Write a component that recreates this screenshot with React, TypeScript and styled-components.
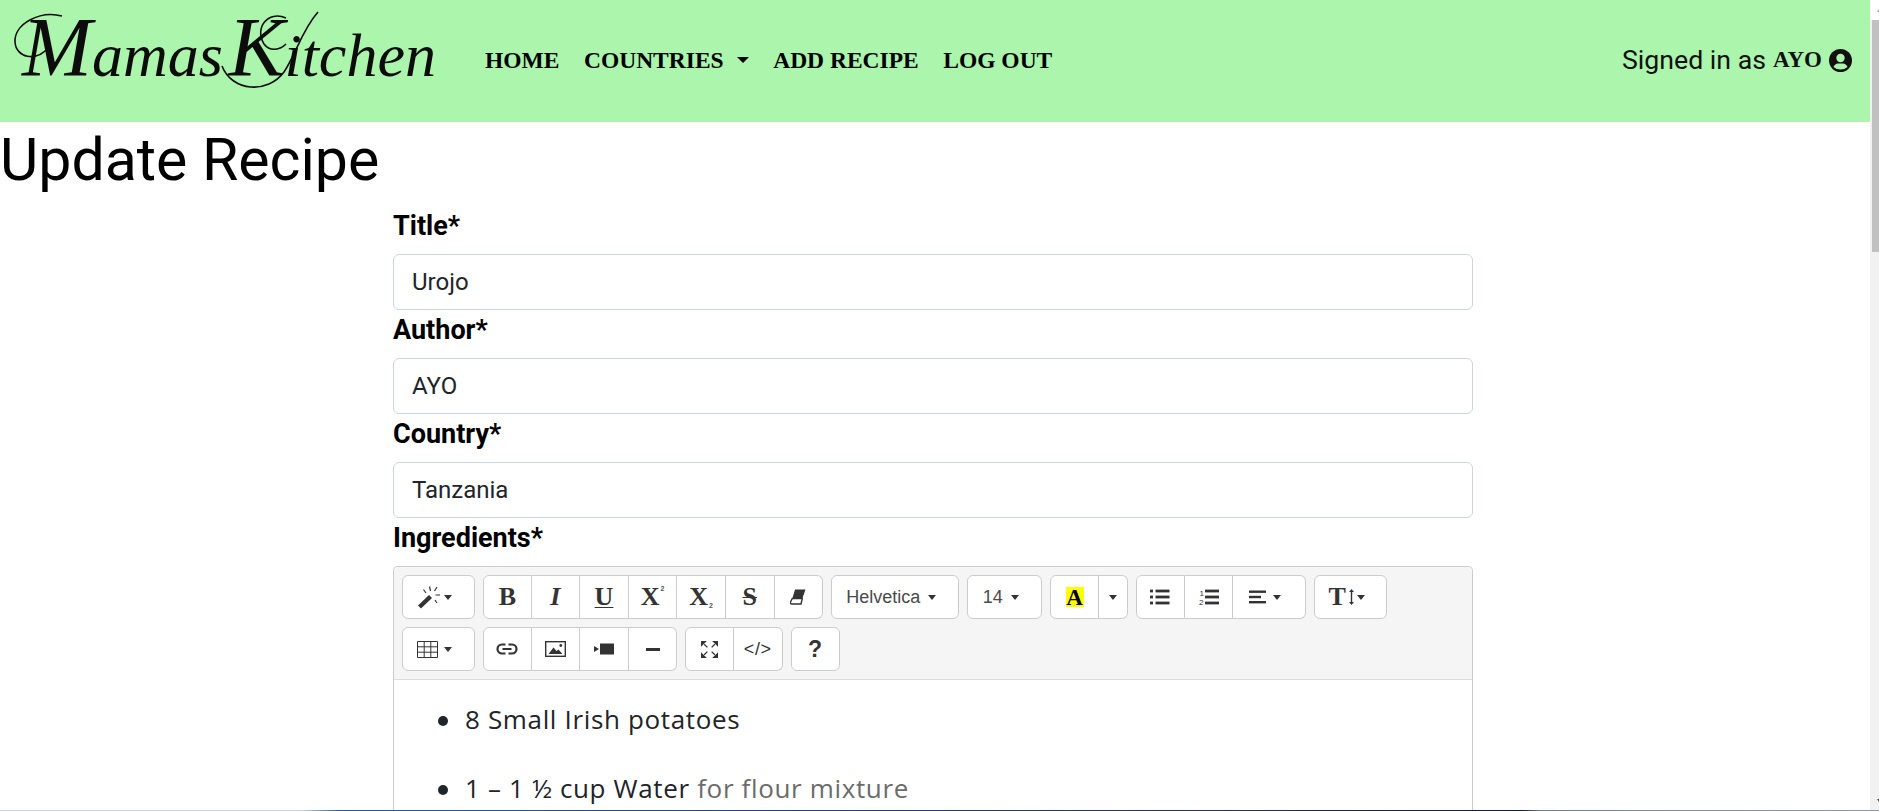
import styled, { createGlobalStyle } from 'styled-components';

const GlobalStyle = createGlobalStyle`
  html, body {
    margin: 0;
    padding: 0;
    background: #fff;
    overflow: hidden;
  }
  * { box-sizing: border-box; }
`;

const Page = styled.div`
  display: flex;
  flex-direction: column;
  height: 811px;
  overflow: hidden;
  font-family: Roboto, 'Liberation Sans', sans-serif;
  color: #000;
`;

const Window = styled.div`
  display: flex;
  flex: 1;
  min-height: 0;
`;

const Main = styled.div`
  flex: 1;
  min-width: 0;
  overflow: hidden;
`;

const Rail = styled.div`
  width: 9px;
  display: flex;
  flex-direction: column;
  align-items: flex-start;
  background: #f1f1f1;
`;

const RailCap = styled.div<{ $down?: boolean }>`
  height: 20px;
  width: 9px;
  display: flex;
  align-items: center;
  justify-content: flex-end;
  background: ${({ $down }) => ($down ? '#f1f1f1' : '#fff')};

  &::after {
    content: '';
    display: block;
    border-left: 2px solid transparent;
    border-right: 0;
    ${({ $down }) =>
      $down ? 'border-top: 3px solid #505050;' : 'border-bottom: 3px solid #a0a0a0;'}
  }
`;

const RailThumb = styled.div`
  width: 7px;
  height: 232px;
  margin-left: 2px;
  background: #c1c1c1;
`;

const RailSpace = styled.div`
  flex: 1;
`;

const Taskbar = styled.div`
  height: 1px;
  background: linear-gradient(
    90deg,
    #c9d6e0 0,
    #c9d6e0 16%,
    #2d5f8a 18%,
    #23466e 45%,
    #2a2f4f 65%,
    #0f1c3a 81%,
    #6f8490 82%,
    #8c9aa3 100%
  );
`;

/* navbar */
const Navbar = styled.nav`
  height: 122px;
  display: flex;
  align-items: flex-start;
  background: #abf5ac;
`;

const Logo = styled.a`
  position: relative;
  display: block;
  width: 482px;
  height: 110px;
  padding-left: 22px;
  font-family: 'Liberation Serif', serif;
  font-style: italic;
  font-size: 62px;
  line-height: 110px;
  white-space: nowrap;
  color: #0c0c0c;
  word-spacing: -10px;
`;

const LogoCap = styled.span`
  font-size: 84px;
  line-height: 80px;
`;

const LogoSwash = styled.svg`
  position: absolute;
  left: 0;
  top: 0;
  fill: none;
  stroke: #0c0c0c;
`;

const NavLinks = styled.div`
  display: flex;
  align-items: center;
  height: 122px;
  padding-left: 3px;
  gap: 24.5px;
  padding-bottom: 2px;
`;

const NavLink = styled.a`
  display: flex;
  align-items: center;
  gap: 13px;
  font-family: 'Liberation Serif', serif;
  font-weight: 700;
  font-size: 23.5px;
  color: #000;
  white-space: nowrap;
`;

const NavCaret = styled.span`
  display: block;
  border-left: 6.5px solid transparent;
  border-right: 6.5px solid transparent;
  border-top: 6.5px solid #000;
`;

const SignedIn = styled.div`
  margin-left: auto;
  height: 122px;
  display: flex;
  align-items: center;
  gap: 7px;
  padding: 0 18px 2px 0;
  font-size: 26.7px;
  color: #111;
  white-space: nowrap;
`;

const UserName = styled.span`
  font-family: 'Liberation Serif', serif;
  font-weight: 700;
  font-size: 23px;
`;

/* form */
const Heading = styled.h1`
  margin: 0 0 8px;
  font-weight: 400;
  font-size: 59px;
  line-height: 76px;
  color: #000;
`;

const Form = styled.form`
  width: 1080px;
  margin-left: 393px;
`;

const Label = styled.label`
  display: block;
  height: 36px;
  margin-bottom: 12px;
  font-weight: 700;
  font-size: 27px;
  line-height: 40px;
`;

const Input = styled.input`
  display: block;
  width: 100%;
  height: 56px;
  padding: 0 18px;
  border: 1px solid #ced4da;
  border-radius: 6px;
  background: #fff;
  color: #212529;
  font-family: Roboto, sans-serif;
  font-size: 24px;
`;

/* summernote style editor */
const Editor = styled.div`
  border: 1px solid #ccc;
  border-bottom: 0;
  border-radius: 5px 5px 0 0;
`;

const Toolbar = styled.div`
  display: flex;
  flex-direction: column;
  gap: 8px;
  height: 113px;
  padding: 8px 8px 0;
  background: #f5f5f5;
  border-bottom: 1px solid #ddd;
  border-radius: 5px 5px 0 0;
`;

const ToolRow = styled.div`
  display: flex;
  gap: 8px;
`;

const ToolGroup = styled.div`
  display: flex;
`;

const ToolButton = styled.button<{ $w?: number; $drop?: boolean; $gap?: number }>`
  display: flex;
  align-items: center;
  justify-content: center;
  gap: ${({ $gap }) => $gap ?? 0}px;
  width: ${({ $w }) => $w ?? 48.6}px;
  height: 44px;
  padding: 0 ${({ $drop }) => ($drop ? 8 : 0)}px 0 0;
  border: 1px solid #ccc;
  background: #fff;
  color: #333;

  & + & {
    border-left: 0;
  }
  &:first-child {
    border-radius: 6px 0 0 6px;
  }
  &:last-child {
    border-radius: 0 6px 6px 0;
  }
  &:only-child {
    border-radius: 6px;
  }
`;

const ToolLabel = styled.span`
  font-family: 'Liberation Sans', sans-serif;
  font-size: 18px;
  line-height: 24px;
  color: #4a4a4a;
`;

const Caret = styled.span`
  display: block;
  border-left: 4px solid transparent;
  border-right: 4px solid transparent;
  border-top: 5px solid #333;
`;

const Glyph = styled.span<{ $italic?: boolean; $under?: boolean; $strike?: boolean }>`
  padding: 0 ${({ $strike }) => ($strike ? 2 : 0)}px;
  font-family: 'Liberation Serif', serif;
  font-weight: 700;
  font-size: 26px;
  line-height: 30px;
  color: #333;
  font-style: ${({ $italic }) => ($italic ? 'italic' : 'normal')};
  text-decoration: ${({ $under, $strike }) =>
    $under ? 'underline' : $strike ? 'line-through' : 'none'};
  text-decoration-thickness: 1px;
  text-underline-offset: 2px;
`;

const Small = styled.span<{ $sub?: boolean }>`
  font-family: 'Liberation Sans', sans-serif;
  font-size: 7px;
  line-height: 8px;
  font-weight: 700;
  color: #555;
  align-self: ${({ $sub }) => ($sub ? 'flex-end' : 'flex-start')};
  margin: ${({ $sub }) => ($sub ? '0 0 8px 1px' : '9px 0 0 1px')};
`;

const Highlight = styled.span`
  display: block;
  width: 18px;
  height: 20px;
  background: #ff0;
  color: #000;
  font-family: 'Liberation Serif', serif;
  font-weight: 700;
  font-size: 23px;
  line-height: 21px;
  text-align: center;
`;

const CodeText = styled.span`
  font-family: 'Liberation Sans', sans-serif;
  font-size: 18px;
  letter-spacing: 0.6px;
  color: #333;
`;

const HelpText = styled.span`
  font-family: 'Liberation Sans', sans-serif;
  font-weight: 700;
  font-size: 23px;
  color: #333;
`;

const EditorBody = styled.div`
  height: 300px;
  background: #fff;
  padding-top: 22px;
`;

const List = styled.ul`
  margin: 0;
  padding: 0 0 0 44px;
  list-style: none;
  font-family: 'Open Sans', sans-serif;
  font-size: 26px;
  line-height: 34px;
  letter-spacing: 0.65px;
  color: #212529;
`;

const Item = styled.li`
  display: flex;
  align-items: center;
  gap: 17px;
  margin-bottom: 35px;

  &::before {
    content: '';
    flex: none;
    width: 10px;
    height: 10px;
    margin-top: 3px;
    border-radius: 50%;
    background: #212529;
  }
`;

const Muted = styled.span`
  color: #6b6b6b;
`;

const IconSvg = styled.svg`
  display: block;
  fill: #333;
`;

function WandIcon() {
  return (
    <IconSvg width="24" height="24" viewBox="0 0 24 24">
      <path d="M1 20.5 L12 10 L15 13 L4 23.5 Z" />
      <path d="M12.5 1.5 L13.5 6 M20 2 L17.5 6 M23 10 L18.5 10 M18 15 L20 18 M6.5 4.5 L9 8" stroke="#333" strokeWidth="1.2" fill="none" />
    </IconSvg>
  );
}

function EraserIcon() {
  return (
    <IconSvg width="16" height="16" viewBox="0 0 16 16">
      <path d="M5 0.5 H15.5 L12.5 9 H2.5 Z" />
      <path d="M2.3 9.5 H12.3 L11 15 H1.8 Q0 15 0.5 13 Z" fill="#fff" stroke="#333" strokeWidth="1.4" />
    </IconSvg>
  );
}

function UnorderedIcon() {
  return (
    <IconSvg width="20" height="16" viewBox="0 0 20 16">
      <rect x="0" y="0.6" width="3" height="2.8" />
      <rect x="0" y="6.6" width="3" height="2.8" />
      <rect x="0" y="12.6" width="3" height="2.8" />
      <rect x="5.5" y="0.6" width="14" height="2.8" />
      <rect x="5.5" y="6.6" width="14" height="2.8" />
      <rect x="5.5" y="12.6" width="14" height="2.8" />
    </IconSvg>
  );
}

function OrderedIcon() {
  return (
    <IconSvg width="20" height="16" viewBox="0 0 20 16">
      <rect x="6" y="0.6" width="14" height="2.8" />
      <rect x="6" y="6.6" width="14" height="2.8" />
      <rect x="6" y="12.6" width="14" height="2.8" />
      <text x="0.5" y="7" fontSize="8" fontFamily="Liberation Sans">1</text>
      <text x="0" y="16" fontSize="8" fontFamily="Liberation Sans">2</text>
    </IconSvg>
  );
}

function AlignIcon() {
  return (
    <IconSvg width="18" height="14" viewBox="0 0 18 14">
      <rect x="0" y="0.5" width="17" height="2.4" />
      <rect x="0" y="5.8" width="12" height="2.4" />
      <rect x="0" y="11" width="17" height="2.4" />
    </IconSvg>
  );
}

function LineHeightIcon() {
  return (
    <IconSvg width="5" height="16" viewBox="0 0 5 16">
      <path d="M2.5 0 L5 3 H3.2 V13 H5 L2.5 16 L0 13 H1.8 V3 H0 Z" />
    </IconSvg>
  );
}

function TableIcon() {
  return (
    <IconSvg width="21" height="17" viewBox="0 0 21 17">
      <path
        d="M0.5 0.5 H20.5 V16.5 H0.5 Z M0.5 5.8 H20.5 M0.5 11.2 H20.5 M7.2 0.5 V16.5 M13.8 0.5 V16.5"
        fill="none"
        stroke="#333"
        strokeWidth="1"
      />
    </IconSvg>
  );
}

function LinkIcon() {
  return (
    <IconSvg width="22" height="12" viewBox="0 0 22 12">
      <path
        d="M9.5 1.5 H6 A4.5 4.5 0 0 0 6 10.5 H9.5 M12.5 1.5 H16 A4.5 4.5 0 0 1 16 10.5 H12.5 M6.5 6 H15.5"
        fill="none"
        stroke="#333"
        strokeWidth="2.2"
      />
    </IconSvg>
  );
}

function PictureIcon() {
  return (
    <IconSvg width="21" height="16" viewBox="0 0 21 16">
      <rect x="0.7" y="0.7" width="19.6" height="14.6" fill="none" stroke="#333" strokeWidth="1.4" />
      <path d="M3.5 13 L8.5 6.5 L11.5 10 L13.5 8.5 L17.5 13 Z" />
      <circle cx="15.8" cy="4.5" r="1.4" />
    </IconSvg>
  );
}

function VideoIcon() {
  return (
    <IconSvg width="20" height="12" viewBox="0 0 20 12">
      <rect x="6" y="0.5" width="14" height="11" />
      <path d="M0 3 L5 6 L0 9 Z" />
    </IconSvg>
  );
}

function RuleIcon() {
  return (
    <IconSvg width="14" height="3" viewBox="0 0 14 3">
      <rect width="14" height="3" />
    </IconSvg>
  );
}

function ExpandIcon() {
  return (
    <IconSvg width="17" height="17" viewBox="0 0 16 16">
      <path d="M0 0 H5.5 L0 5.5 Z M16 0 V5.5 L10.5 0 Z M0 16 V10.5 L5.5 16 Z M16 16 H10.5 L16 10.5 Z" />
      <path d="M3 3 L6 6 M13 3 L10 6 M3 13 L6 10 M13 13 L10 10" stroke="#333" strokeWidth="1.2" fill="none" />
    </IconSvg>
  );
}

function UserIcon() {
  return (
    <svg width="23" height="23" viewBox="0 0 23 23" style={{ display: 'block' }}>
      <circle cx="11.5" cy="11.5" r="11.5" fill="#111" />
      <circle cx="11.5" cy="9" r="4.2" fill="#abf5ac" />
      <path d="M4.5 18 Q6 14.5 9 14.5 H14 Q17 14.5 18.5 18 Q15.5 20.6 11.5 20.6 Q7.5 20.6 4.5 18 Z" fill="#abf5ac" />
    </svg>
  );
}

const fields = [
  { label: 'Title*', value: 'Urojo' },
  { label: 'Author*', value: 'AYO' },
  { label: 'Country*', value: 'Tanzania' },
];

export default function App() {
  return (
    <Page>
      <GlobalStyle />
      <Window>
        <Main>
          <Navbar>
            <Logo>
              <LogoCap>M</LogoCap>amas <LogoCap>K</LogoCap>itchen
              <LogoSwash width="440" height="100" viewBox="0 0 440 100" strokeWidth="1.6">
                <path d="M62 16 C40 10 14 24 15 42 C16 58 36 62 48 48" />
                <path d="M222 66 C232 92 268 94 284 72 C296 54 302 30 318 12" />
                <path d="M286 18 C268 10 254 28 264 44 C270 52 280 50 286 44" />
              </LogoSwash>
            </Logo>
            <NavLinks>
              <NavLink>HOME</NavLink>
              <NavLink>
                COUNTRIES <NavCaret />
              </NavLink>
              <NavLink>ADD RECIPE</NavLink>
              <NavLink>LOG OUT</NavLink>
            </NavLinks>
            <SignedIn>
              Signed in as <UserName>AYO</UserName>
              <UserIcon />
            </SignedIn>
          </Navbar>

          <Heading>Update Recipe</Heading>

          <Form>
            {fields.map((field) => (
              <div key={field.label}>
                <Label>{field.label}</Label>
                <Input defaultValue={field.value} />
              </div>
            ))}
            <Label>Ingredients*</Label>
            <Editor>
              <Toolbar>
                <ToolRow>
                  <ToolGroup>
                    <ToolButton type="button" $w={73} $drop $gap={3}>
                      <WandIcon />
                      <Caret />
                    </ToolButton>
                  </ToolGroup>
                  <ToolGroup>
                    <ToolButton type="button"><Glyph>B</Glyph></ToolButton>
                    <ToolButton type="button"><Glyph $italic>I</Glyph></ToolButton>
                    <ToolButton type="button"><Glyph $under>U</Glyph></ToolButton>
                    <ToolButton type="button"><Glyph>X</Glyph><Small>2</Small></ToolButton>
                    <ToolButton type="button"><Glyph>X</Glyph><Small $sub>2</Small></ToolButton>
                    <ToolButton type="button"><Glyph $strike>S</Glyph></ToolButton>
                    <ToolButton type="button"><EraserIcon /></ToolButton>
                  </ToolGroup>
                  <ToolGroup>
                    <ToolButton type="button" $w={128} $drop $gap={8}>
                      <ToolLabel>Helvetica</ToolLabel>
                      <Caret />
                    </ToolButton>
                  </ToolGroup>
                  <ToolGroup>
                    <ToolButton type="button" $w={75} $drop $gap={8}>
                      <ToolLabel>14</ToolLabel>
                      <Caret />
                    </ToolButton>
                  </ToolGroup>
                  <ToolGroup>
                    <ToolButton type="button" $w={49}><Highlight>A</Highlight></ToolButton>
                    <ToolButton type="button" $w={29}><Caret /></ToolButton>
                  </ToolGroup>
                  <ToolGroup>
                    <ToolButton type="button"><UnorderedIcon /></ToolButton>
                    <ToolButton type="button"><OrderedIcon /></ToolButton>
                    <ToolButton type="button" $w={72.8} $drop $gap={6}><AlignIcon /><Caret /></ToolButton>
                  </ToolGroup>
                  <ToolGroup>
                    <ToolButton type="button" $w={73} $drop $gap={3}>
                      <Glyph>T</Glyph>
                      <LineHeightIcon />
                      <Caret />
                    </ToolButton>
                  </ToolGroup>
                </ToolRow>
                <ToolRow>
                  <ToolGroup>
                    <ToolButton type="button" $w={73} $drop $gap={6}><TableIcon /><Caret /></ToolButton>
                  </ToolGroup>
                  <ToolGroup>
                    <ToolButton type="button"><LinkIcon /></ToolButton>
                    <ToolButton type="button"><PictureIcon /></ToolButton>
                    <ToolButton type="button"><VideoIcon /></ToolButton>
                    <ToolButton type="button"><RuleIcon /></ToolButton>
                  </ToolGroup>
                  <ToolGroup>
                    <ToolButton type="button"><ExpandIcon /></ToolButton>
                    <ToolButton type="button"><CodeText>&lt;/&gt;</CodeText></ToolButton>
                  </ToolGroup>
                  <ToolGroup>
                    <ToolButton type="button" $w={49}><HelpText>?</HelpText></ToolButton>
                  </ToolGroup>
                </ToolRow>
              </Toolbar>
              <EditorBody>
                <List>
                  <Item>
                    <span>8 Small Irish potatoes</span>
                  </Item>
                  <Item>
                    <span>
                      1 – 1 ½ cup Water <Muted>for flour mixture</Muted>
                    </span>
                  </Item>
                </List>
              </EditorBody>
            </Editor>
          </Form>
        </Main>
        <Rail>
          <RailCap />
          <RailThumb />
          <RailSpace />
          <RailCap $down />
        </Rail>
      </Window>
      <Taskbar />
    </Page>
  );
}
